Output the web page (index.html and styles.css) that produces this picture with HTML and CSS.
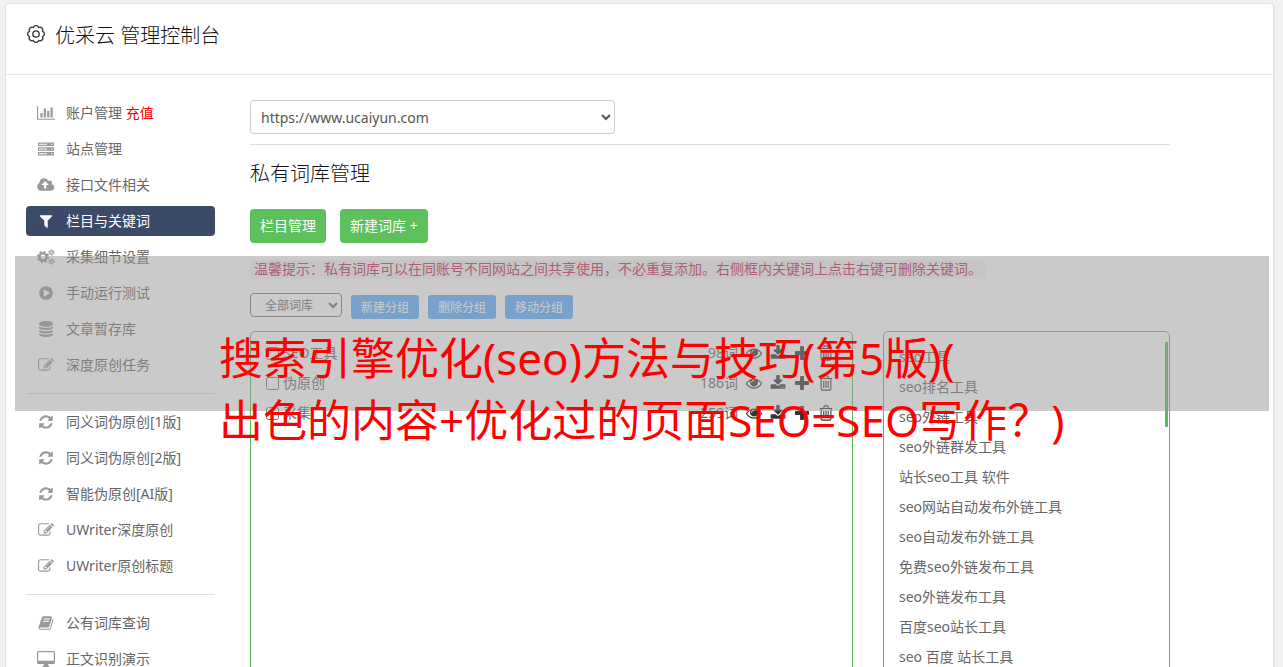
FILE: index.html
```
<!doctype html>
<html lang="zh">
  <head>
    <meta charset="UTF-8" />
    <meta name="viewport" content="width=device-width, initial-scale=1.0" />
    <title>优采云 管理控制台</title>
    <link rel="stylesheet" href="styles.css">
  </head>
  <body>
    <!-- 图标 -->
    <svg class="sprite" aria-hidden="true">
      <symbol id="i-gear" viewBox="0 0 20 20"><path d="M16.560 12.720A2.900 2.900 0 0 1 12.720 16.560A2.900 2.900 0 0 1 7.280 16.560A2.900 2.900 0 0 1 3.440 12.720A2.900 2.900 0 0 1 3.440 7.280A2.900 2.900 0 0 1 7.280 3.440A2.900 2.900 0 0 1 12.720 3.440A2.900 2.900 0 0 1 16.560 7.280A2.900 2.900 0 0 1 16.560 12.720z" fill="none" stroke="currentColor" stroke-width="1.300" /><circle cx="10" cy="10" r="3.200" fill="none" stroke="currentColor" stroke-width="1.300" /></symbol>
      <symbol id="i-chart" viewBox="0 0 2048 1792"><path d="M640 896v512h-256v-512h256zm384-512v1024h-256v-1024h256zm1024 1152v128h-2048v-1536h128v1408h1920zm-640-896v768h-256v-768h256zm384-384v1152h-256v-1152h256z" /></symbol>
      <symbol id="i-server" viewBox="-1 0 18 14"><path fill-rule="evenodd" d="M0 .5h16v3.600H0zM1 1.800v1h8v-1zM13 1.800v1h1.500v-1zM0 5.200h16v3.600H0zM1 6.500v1h8v-1zM13 6.500v1h1.500v-1zM0 9.900h16v3.600H0zM1 11.200v1h8v-1zM13 11.200v1h1.500v-1z" /></symbol>
      <symbol id="i-cloud" viewBox="0 0 1856 1792"><path d="M1216 864q0-14-9-23l-352-352q-9-9-23-9t-23 9l-351 351q-10 12-10 24 0 14 9 23t23 9h224v352q0 13 9.500 22.500t22.500 9.500h192q13 0 22.500-9.500t9.500-22.500v-352h224q13 0 22.500-9.500t9.500-22.500zm640 288q0 159-112.500 271.500t-271.500 112.500h-1088q-185 0-316.500-131.500t-131.500-316.500q0-130 70-240t188-165q-2-30-2-43 0-212 150-362t362-150q156 0 285.500 87t188.500 231q71-62 166-62 106 0 181 75t75 181q0 76-41 138 130 31 213.500 135.500t83.500 238.500z" /></symbol>
      <symbol id="i-filter" viewBox="0 0 1792 1792"><path d="M1595 295q17 41-14 70l-493 493v742q0 42-39 59-13 5-25 5-27 0-45-19l-256-256q-19-19-19-45v-486l-493-493q-31-29-14-70 17-39 59-39h1280q42 0 59 39z" /></symbol>
      <symbol id="i-cogs" viewBox="0 0 18 16"><g fill="none" stroke="currentColor"><circle cx="6" cy="8" r="3.6" stroke-width="2.400" /><circle cx="6" cy="8" r="5.3" stroke-width="1.600" stroke-dasharray="2.080 2.080" /><circle cx="14.500" cy="3.500" r="1.700" stroke-width="1.200" /><circle cx="14.500" cy="3.500" r="2.700" stroke-width="1" stroke-dasharray="1.410 1.410" /><circle cx="14.500" cy="12.500" r="1.700" stroke-width="1.200" /><circle cx="14.500" cy="12.500" r="2.700" stroke-width="1" stroke-dasharray="1.410 1.410" /></g></symbol>
      <symbol id="i-play" viewBox="0 0 1792 1792"><path d="M896 128q209 0 385.500 103t279.500 279.500 103 385.500-103 385.500-279.500 279.500-385.500 103-385.500-103-279.500-279.500-103-385.500 103-385.500 279.500-279.500 385.500-103zm384 823q32-18 32-55t-32-55l-544-320q-31-19-64-1-32 19-32 56v640q0 37 32 56 16 8 32 8 17 0 32-9z" /></symbol>
      <symbol id="i-database" viewBox="0 0 1792 1792"><path d="M896 768q237 0 443-43t325-127v170q0 69-103 128t-280 93.500-385 34.500-385-34.500-280-93.500-103-128v-170q119 84 325 127t443 43zm0 768q237 0 443-43t325-127v170q0 69-103 128t-280 93.500-385 34.500-385-34.500-280-93.500-103-128v-170q119 84 325 127t443 43zm0-384q237 0 443-43t325-127v170q0 69-103 128t-280 93.500-385 34.500-385-34.500-280-93.500-103-128v-170q119 84 325 127t443 43zm0-1152q208 0 385 34.500t280 93.500 103 128v128q0 69-103 128t-280 93.500-385 34.500-385-34.500-280-93.500-103-128v-128q0-69 103-128t280-93.500 385-34.500z" /></symbol>
      <symbol id="i-edit" viewBox="0 0 1792 1792"><path d="M888 1184l116-116-152-152-116 116v56h96v96h56zm440-720q-16-16-33 1l-350 350q-17 17-1 33t33-1l350-350q17-17 1-33zm80 594v190q0 119-84.500 203.500t-203.500 84.500h-832q-119 0-203.500-84.500t-84.500-203.500v-832q0-119 84.500-203.500t203.500-84.500h832q63 0 117 25 15 7 18 23 3 17-9 29l-49 49q-14 14-32 8-23-6-45-6h-832q-66 0-113 47t-47 113v832q0 66 47 113t113 47h832q66 0 113-47t47-113v-126q0-13 9-22l64-64q15-15 35-7t20 29zm-96-738l288 288-672 672h-288v-288zm444 132l-92 92-288-288 92-92q28-28 68-28t68 28l152 152q28 28 28 68t-28 68z" /></symbol>
      <symbol id="i-refresh" viewBox="0 0 1792 1792"><path d="M1639 1056q0 5-1 7-64 268-268 434.500t-478 166.500q-146 0-282.500-55t-243.500-157l-129 129q-19 19-45 19t-45-19-19-45v-448q0-26 19-45t45-19h448q26 0 45 19t19 45-19 45l-137 137q71 66 161 102t187 36q134 0 250-65t186-179q11-17 53-117 8-23 30-23h192q13 0 22.500 9.500t9.500 22.500zm25-800v448q0 26-19 45t-45 19h-448q-26 0-45-19t-19-45 19-45l138-138q-148-137-349-137-134 0-250 65t-186 179q-11 17-53 117-8 23-30 23h-199q-13 0-22.500-9.500t-9.500-22.500v-7q65-268 270-434.500t480-166.500q146 0 284 55.500t245 156.500l130-129q19-19 45-19t45 19 19 45z" /></symbol>
      <symbol id="i-book" viewBox="0 0 1792 1792"><path d="M1703 478q40 57 18 129l-275 906q-19 64-76.500 107.500t-122.500 43.500h-923q-77 0-148.500-53.500t-99.500-131.500q-24-67-2-127 0-4 3-27t4-37q1-8-3-21.500t-3-19.500q2-11 8-21t16.500-23.500 16.500-23.500q23-38 45-91.500t30-91.500q3-10 .5-30t-.5-28q3-11 17-28t17-23q21-36 42-92t25-90q1-9-2.500-32t.5-28q4-13 22-30.500t22-22.500q19-26 42.500-84.500t27.500-96.500q1-8-3-25.500t-2-26.500q2-8 9-18t18-23 17-21q8-12 16.500-30.500t15-35 16-36 19.500-32 26.500-23.500 36-11.500 47.500 5.500l-1 3q38-9 51-9h761q74 0 114 56t18 130l-274 906q-36 119-71.500 153.500t-128.500 34.500h-869q-27 0-38 15-11 16-1 43 24 70 144 70h923q29 0 56-15.500t35-41.500l300-987q7-22 5-57 38 15 59 43zm-1064 2q-4 13 2 22.500t20 9.500h608q13 0 25.500-9.500t16.500-22.500l21-64q4-13-2-22.500t-20-9.500h-608q-13 0-25.500 9.500t-16.500 22.500zm-83 256q-4 13 2 22.500t20 9.500h608q13 0 25.500-9.500t16.500-22.500l21-64q4-13-2-22.500t-20-9.500h-608q-13 0-25.500 9.500t-16.500 22.500z" /></symbol>
      <symbol id="i-desktop" viewBox="0 0 18 16"><path fill-rule="evenodd" d="M1.500 0h15A1.500 1.500 0 0 1 18 1.500v10a1.500 1.500 0 0 1-1.500 1.500H11l.6 1.800.9.4V16h-7v-.8l.9-.4L7 13H1.500A1.500 1.500 0 0 1 0 11.500v-10A1.500 1.500 0 0 1 1.500 0zM1.200 1.200v8.600h15.600V1.200z" /></symbol>
      <symbol id="i-eye" viewBox="0 0 1792 1792"><path d="M1664 960q-152-236-381-353 61 104 61 225 0 185-131.500 316.500t-316.500 131.500-316.500-131.500-131.500-316.500q0-121 61-225-229 117-381 353 133 205 333.500 326.500t434.500 121.500 434.500-121.500 333.500-326.500zm-720-384q0-20-14-34t-34-14q-125 0-214.500 89.500t-89.500 214.500q0 20 14 34t34 14 34-14 14-34q0-86 61-147t147-61q20 0 34-14t14-34zm848 384q0 34-20 69-140 230-376.500 368.500t-499.500 138.500-499.500-139-376.500-368q-20-35-20-69t20-69q140-229 376.500-368t499.500-139 499.500 139 376.500 368q20 35 20 69z" /></symbol>
      <symbol id="i-download" viewBox="0 0 1792 1792"><path d="M1344 1344q0-26-19-45t-45-19-45 19-19 45 19 45 45 19 45-19 19-45zm256 0q0-26-19-45t-45-19-45 19-19 45 19 45 45 19 45-19 19-45zm128-224v320q0 40-28 68t-68 28h-1472q-40 0-68-28t-28-68v-320q0-40 28-68t68-28h465l135 136q58 56 136 56t136-56l136-136h464q40 0 68 28t28 68zm-325-569q17 41-14 70l-448 448q-18 19-45 19t-45-19l-448-448q-31-29-14-70 17-39 59-39h256v-448q0-26 19-45t45-19h256q26 0 45 19t19 45v448h256q42 0 59 39z" /></symbol>
      <symbol id="i-plus" viewBox="100 36 1592 1592"><path d="M1600 736v192q0 40-28 68t-68 28h-416v416q0 40-28 68t-68 28h-192q-40 0-68-28t-28-68v-416h-416q-40 0-68-28t-28-68v-192q0-40 28-68t68-28h416v-416q0-40 28-68t68-28h192q40 0 68 28t28 68v416h416q40 0 68 28t28 68z" /></symbol>
      <symbol id="i-trash" viewBox="0 0 16 18"><path d="M1 4h14M5.500 4V2.500a1.500 1.500 0 0 1 1.500-1.500h2a1.500 1.500 0 0 1 1.500 1.500V4M2.500 4v11.500a1.500 1.500 0 0 0 1.500 1.500h8a1.500 1.500 0 0 0 1.500-1.500V4M5.500 6.500v8M8 6.500v8M10.500 6.500v8" fill="none" stroke="currentColor" stroke-width="1.200" /></symbol>
    </svg>

    <div class="panel">
      <header class="panel-head">
        <svg class="icon-gear"><use href="#i-gear" /></svg>
        <h1>优采云 管理控制台</h1>
      </header>

      <div class="panel-body">
        <nav class="menu">
          <a href="#"><svg><use href="#i-chart" /></svg><span>账户管理 <em>充值</em></span></a>
          <a href="#"><svg><use href="#i-server" /></svg>站点管理</a>
          <a href="#"><svg><use href="#i-cloud" /></svg>接口文件相关</a>
          <a href="#" class="active"><svg><use href="#i-filter" /></svg>栏目与关键词</a>
          <a href="#"><svg><use href="#i-cogs" /></svg>采集细节设置</a>
          <a href="#"><svg><use href="#i-play" /></svg>手动运行测试</a>
          <a href="#"><svg><use href="#i-database" /></svg>文章暂存库</a>
          <a href="#"><svg><use href="#i-edit" /></svg>深度原创任务</a>
          <hr />
          <a href="#"><svg><use href="#i-refresh" /></svg>同义词伪原创[1版]</a>
          <a href="#"><svg><use href="#i-refresh" /></svg>同义词伪原创[2版]</a>
          <a href="#"><svg><use href="#i-refresh" /></svg>智能伪原创[AI版]</a>
          <a href="#"><svg><use href="#i-edit" /></svg>UWriter深度原创</a>
          <a href="#"><svg><use href="#i-edit" /></svg>UWriter原创标题</a>
          <hr />
          <a href="#"><svg><use href="#i-book" /></svg>公有词库查询</a>
          <a href="#"><svg><use href="#i-desktop" /></svg>正文识别演示</a>
        </nav>

        <main class="content">
          <select class="site-select" aria-label="站点">
            <option>https://www.ucaiyun.com</option>
          </select>
          <hr />
          <h2>私有词库管理</h2>
          <div class="actions">
            <button type="button" class="btn">栏目管理</button>
            <button type="button" class="btn">新建词库 +</button>
          </div>
          <p class="tip">温馨提示：私有词库可以在同账号不同网站之间共享使用，不必重复添加。右侧框内关键词上点击右键可删除关键词。</p>
          <div class="groups">
            <select class="group-select" aria-label="词库分组">
              <option>全部词库</option>
            </select>
            <button type="button" class="btn-sm">新建分组</button>
            <button type="button" class="btn-sm">删除分组</button>
            <button type="button" class="btn-sm">移动分组</button>
          </div>

          <div class="boxes">
            <ul class="box lib-list">
              <li>
                <label><input type="checkbox" />SEO工具</label>
                <span class="count">98词</span>
                <button type="button" aria-label="查看"><svg><use href="#i-eye" /></svg></button>
                <button type="button" aria-label="下载"><svg><use href="#i-download" /></svg></button>
                <button type="button" aria-label="添加"><svg><use href="#i-plus" /></svg></button>
                <button type="button" aria-label="删除"><svg><use href="#i-trash" /></svg></button>
              </li>
              <li>
                <label><input type="checkbox" />伪原创</label>
                <span class="count">186词</span>
                <button type="button" aria-label="查看"><svg><use href="#i-eye" /></svg></button>
                <button type="button" aria-label="下载"><svg><use href="#i-download" /></svg></button>
                <button type="button" aria-label="添加"><svg><use href="#i-plus" /></svg></button>
                <button type="button" aria-label="删除"><svg><use href="#i-trash" /></svg></button>
              </li>
              <li>
                <label><input type="checkbox" />采集</label>
                <span class="count">259词</span>
                <button type="button" aria-label="查看"><svg><use href="#i-eye" /></svg></button>
                <button type="button" aria-label="下载"><svg><use href="#i-download" /></svg></button>
                <button type="button" aria-label="添加"><svg><use href="#i-plus" /></svg></button>
                <button type="button" aria-label="删除"><svg><use href="#i-trash" /></svg></button>
              </li>
            </ul>
            <div class="box word-box">
              <ul class="word-list">
                <li>seo工具</li>
                <li>seo排名工具</li>
                <li>seo外链工具</li>
                <li>seo外链群发工具</li>
                <li>站长seo工具 软件</li>
                <li>seo网站自动发布外链工具</li>
                <li>seo自动发布外链工具</li>
                <li>免费seo外链发布工具</li>
                <li>seo外链发布工具</li>
                <li>百度seo站长工具</li>
                <li>seo 百度 站长工具</li>
              </ul>
              <div class="scroll-thumb"></div>
            </div>
          </div>
        </main>
      </div>
    </div>

    <div class="banner">搜索引擎优化(seo)方法与技巧(第5版)(<br />出色的内容+优化过的页面SEO=SEO写作<span class="mark">？</span>)</div>
  </body>
</html>
```
FILE: styles.css
```
* {
  box-sizing: border-box;
}
body {
  position: relative;
  height: 100vh;
  margin: 0;
  overflow: hidden;
  background: #f1f1f1;
  color: #666;
  font-family: 'Noto Sans', 'Noto Sans CJK SC', sans-serif;
  font-size: 14px;
  line-height: 20px;
}
h1,
h2 {
  margin: 0;
  color: #111;
  font-size: 20px;
  font-weight: 300;
  line-height: 32px;
}
ul {
  margin: 0;
  padding: 0;
  list-style: none;
}
hr {
  width: 100%;
  margin: 0;
  border: 0;
  border-top: 1px solid #ddd;
}
button,
select {
  font-family: inherit;
}
svg {
  fill: currentColor;
}
.sprite {
  display: none;
}

.panel {
  margin: 3px 8px 0 5px;
  background: #fff;
  border: 1px solid #e4e4e4;
  border-right-width: 2px;
  border-radius: 5px;
}
.panel-head {
  display: flex;
  gap: 9px;
  height: 71px;
  padding: 16px 20px;
  border-bottom: 1px solid #e4e4e4;
}
.icon-gear {
  width: 20px;
  height: 20px;
  margin-top: 4px;
  color: #333;
}
.panel-body {
  display: flex;
  gap: 35px;
  padding: 23px 20px;
}

.menu {
  display: flex;
  flex: none;
  flex-direction: column;
  gap: 6px;
  width: 189px;
}
.menu a {
  display: flex;
  align-items: center;
  gap: 11px;
  height: 30px;
  padding: 0 11px;
  border-radius: 4px;
  color: #666;
  text-decoration: none;
}
.menu svg {
  width: 18px;
  height: 16px;
  color: #999;
}
.menu em {
  color: #f00;
  font-style: normal;
}
.menu .active,
.menu .active svg {
  background: #3b4a66;
  color: #fff;
}
.menu hr {
  margin: 7px 0;
}

.content {
  flex: 1;
  min-width: 0;
  max-width: 920px;
  padding-top: 2px;
}
.site-select {
  display: block;
  width: 365px;
  height: 34px;
  margin-bottom: 10px;
  padding: 0 6px;
  background: #fff;
  border: 1px solid #ccc;
  border-radius: 4px;
  color: #555;
  font-size: 14px;
}
.content h2 {
  margin: 13px 0 19px;
}
.actions {
  display: flex;
  gap: 14px;
}
.btn {
  height: 34px;
  padding: 0 10px 2px;
  background: #5cc05c;
  border: 0;
  border-radius: 4px;
  color: #fff;
  font-size: 14px;
}
.tip {
  width: fit-content;
  margin: 17px 0 14px;
  padding: 0 4px 1px;
  background: #f9f2f4;
  border-radius: 4px;
  color: #c7254e;
  line-height: 18px;
}
.groups {
  display: flex;
  gap: 9px;
}
.group-select {
  width: 92px;
  height: 24px;
  padding: 0 10px;
  background: #fff;
  border: 1px solid #767676;
  border-radius: 4px;
  color: #666;
  font-size: 12px;
}
.btn-sm {
  height: 24px;
  margin-top: 2px;
  padding: 0 10px;
  background: #5aafff;
  border: 0;
  border-radius: 3px;
  color: #fff;
  font-size: 12px;
}

.boxes {
  display: flex;
  gap: 30px;
  margin-top: 12px;
}
.box {
  height: 400px;
  border: 1px solid #5cb85c;
  border-radius: 5px;
}
.lib-list {
  flex: 1;
  padding: 6px 18px 6px 15px;
}
.lib-list li {
  display: flex;
  align-items: center;
  gap: 8px;
  height: 30px;
}
.lib-list label {
  display: flex;
  flex: 1;
  align-items: center;
  gap: 4px;
}
.lib-list input {
  width: 13px;
  height: 13px;
  margin: 0;
}
.lib-list button {
  display: flex;
  padding: 0;
  background: none;
  border: 0;
  color: #333;
}
.lib-list button svg {
  width: 16px;
  height: 16px;
}
.word-box {
  display: flex;
  justify-content: space-between;
  width: 287px;
  padding: 10px 1px 10px 15px;
}
.word-list li {
  height: 30px;
  line-height: 30px;
}
.scroll-thumb {
  width: 3px;
  height: 85px;
  background: #5cb85c;
}

/* 标题横幅 */
.banner {
  position: absolute;
  top: 256px;
  right: 14px;
  left: 15px;
  height: 155px;
  padding: 72px 0 0 204px;
  background: rgba(150, 150, 150, 0.5);
  color: #f00;
  font-size: 44px;
  line-height: 60px;
  white-space: nowrap;
  pointer-events: none;
}
/* 问号在全角格内居中 */
.banner .mark {
  font-family: 'Noto Sans CJK TC', sans-serif;
}
```
